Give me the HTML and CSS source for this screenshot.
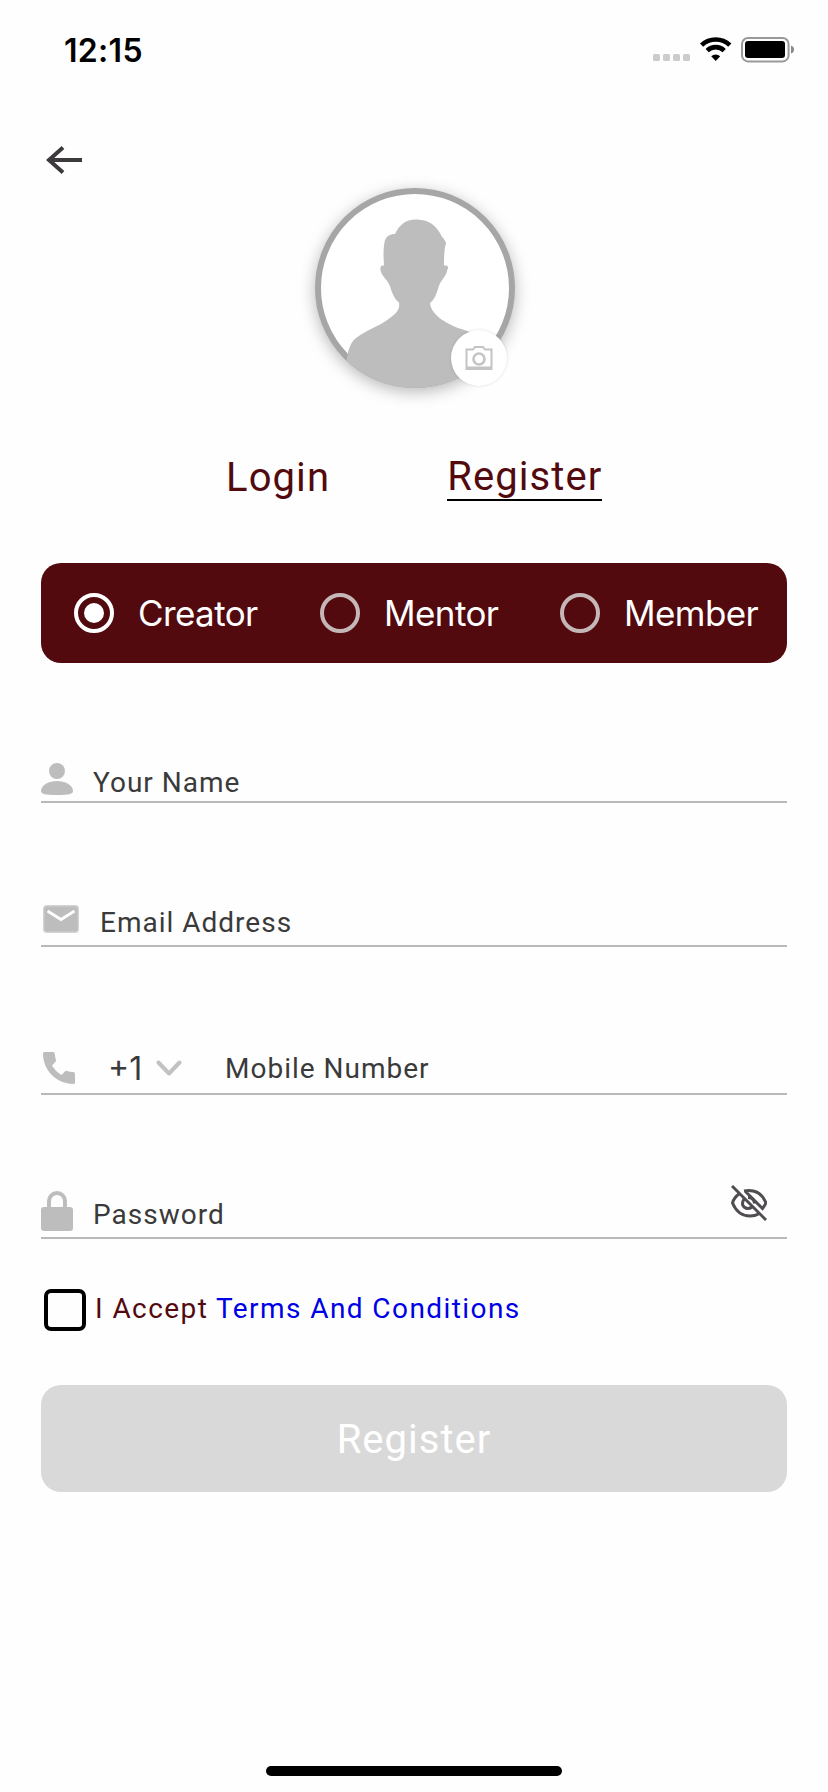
FILE: index.html
```html
<!DOCTYPE html>
<html lang="en">
<head>
<meta charset="utf-8">
<title>Register</title>
<link rel="stylesheet" href="styles.css">
</head>
<body>
<div class="screen">
  <header class="status">
    <span class="time">12:15</span>
    <svg class="status-icons" width="142" height="26" viewBox="0 0 142 26">
      <g fill="#ccc"><rect x="0" y="17" width="7" height="7" rx="1.5"/><rect x="10" y="17" width="7" height="7" rx="1.5"/><rect x="20" y="17" width="7" height="7" rx="1.5"/><rect x="30" y="17" width="7" height="7" rx="1.5"/></g>
      <g fill="none" stroke="#000" stroke-width="4.7"><path d="M48.6 8.1a20.5 20.5 0 0 1 28.2 0"/><path d="M54.2 13.6a12.3 12.3 0 0 1 17 0"/></g>
      <path d="M58.2 19.2a6.5 6.5 0 0 1 9 0L62.7 24z" fill="#000"/>
      <rect x="89" y="1" width="46.6" height="23.4" rx="6" fill="none" stroke="#999" stroke-width="2"/>
      <rect x="92" y="4" width="40" height="17" rx="3" fill="#000"/>
      <path d="M138 8.500q3 1 3 4t-3 4z" fill="#888"/>
    </svg>
  </header>

  <nav class="nav">
    <svg width="36" height="28" viewBox="0 0 36 28" fill="none" stroke="#3c3a3c" stroke-width="4"><path d="M2 14h34M17 1.500L3 14l14 12.500"/></svg>
  </nav>

  <div class="avatar">
    <svg class="person" width="200" height="200" viewBox="0 0 200 200">
      <defs><clipPath id="disc"><circle cx="100" cy="100" r="100"/></clipPath></defs>
      <g clip-path="url(#disc)">
        <path fill="#bdbdbd" d="M102 31.500C91 31 84 37 80 46C75 46 71 48 69.500 54C68 62 68.500 70 69 77.500C66 77 65 79 65.500 82C67 89 72 91 74.500 97C77 104 79 111 84 114.500C85 121 82 125 75 130C65 138 51 142 41 150C34 156 33 164 31.500 173V200H190V160C178 150 155 144 143 140C131 135 116 127 115 115C119 112 121 107 123 101C124.500 93 131 89 132 83C134 78 133 77.500 129 77.500C129 70 129 62 131 55C130 51 127 50 125.500 46C121 38 115 32 102 31.500z"/>
      </g>
    </svg>
    <span class="camera">
      <svg width="28" height="26" viewBox="0 0 28 26" fill="none" stroke="#c4c4c4" stroke-width="2"><path d="M1.500 4.500H8L10 2h8l2 2.500h6.500V24h-25z"/><path d="M1 22.500h26"/><circle cx="14" cy="14" r="5.500" stroke-width="2.600"/></svg>
    </span>
  </div>

  <div class="tabs">
    <span class="tab">Login</span>
    <span class="tab tab-active">Register</span>
  </div>

  <div class="roles">
    <span class="role"><i class="radio radio-on"></i>Creator</span>
    <span class="role"><i class="radio"></i>Mentor</span>
    <span class="role"><i class="radio"></i>Member</span>
  </div>

  <div class="field field-name">
    <svg class="icon" width="32" height="32" viewBox="0 0 32 32" fill="#bdbdbd"><circle cx="16" cy="8" r="8"/><path d="M0 28C0 22 8 18 16 18s16 4 16 10c0 3-4 4-16 4S0 31 0 28z"/></svg>
    <span class="label">Your Name</span>
  </div>
  <div class="field field-email">
    <svg class="icon" width="36" height="28" viewBox="0 0 36 28"><rect x=".7" y=".7" width="34.600" height="26.600" rx="3" fill="#bdbdbd" stroke="#d2d2d2" stroke-width="1.400"/><path d="M4.500 6L18 14.500 31.500 6" fill="none" stroke="#fff" stroke-width="2.800"/></svg>
    <span class="label">Email Address</span>
  </div>
  <div class="field field-mobile">
    <svg class="icon" width="32" height="32" viewBox="0 0 32 32" fill="#bdbdbd"><path d="M1.500 0H10q1.500 0 1.700 1.700.3 3.200 1.200 6 .4 1.200-.4 2L9 13.500Q12.500 19.500 18.500 23l3.600-3.700q1-.8 2-.4 3 1 6.100 1.200Q32 20.300 32 22v8.500Q32 32 30.400 32C13.500 32 0 18.500 0 1.600Q0 0 1.500 0z"/></svg>
    <span class="code">+1</span>
    <svg class="chevron" width="26" height="16" viewBox="0 0 26 16" fill="none" stroke="#c2c2c2" stroke-width="4" stroke-linecap="round" stroke-linejoin="round"><path d="M2.500 2.500l10.500 11L23.500 2.500"/></svg>
    <span class="label">Mobile Number</span>
  </div>
  <div class="field field-password">
    <svg class="icon" width="32" height="40" viewBox="0 0 32 40"><rect y="16" width="32" height="24" rx="3" fill="#bdbdbd"/><path d="M8 18v-8a8 8 0 0 1 16 0v8" fill="none" stroke="#bdbdbd" stroke-width="4"/></svg>
    <span class="label">Password</span>
    <svg class="eye" width="36" height="36" viewBox="0 0 36 36" fill="none" stroke="#504d50" stroke-width="3"><path d="M8 9Q3 12.500 1.500 18 7 31 19 31q5 0 8.500-2"/><path d="M13 6q16-3 22 12-1.500 3-3.500 5.500L14 6"/><path d="M13 14q-3 5 0 8 4 3 8 0M17 12.500q6 0 6.500 6"/><path d="M1 1l34 34" stroke-width="3"/></svg>
  </div>

  <div class="terms">
    <i class="checkbox"></i>
    <span class="accept">I Accept <span class="link">Terms And Conditions</span></span>
  </div>

  <div class="submit">Register</div>
  <div class="home"></div>
</div>
</body>
</html>
```
FILE: styles.css
```css
* { box-sizing: border-box; }
body { margin: 0; background: #fefefe; font-family: Roboto, sans-serif; }
svg { display: block; flex: none; }
.screen {
  width: 828px;
  height: 1792px;
  display: flex;
  flex-direction: column;
  padding: 0 41px;
}
.status {
  height: 100px;
  flex: none;
  display: flex;
  justify-content: space-between;
  padding: 30px 0 0 23px;
}
.time {
  font: 600 32px/42px Inter, sans-serif;
  letter-spacing: 0.3px;
  color: #000;
}
.status-icons { margin: 7px -8px 0 0; }
.nav { height: 88px; flex: none; padding: 46px 0 0 5px; }
.avatar {
  position: relative;
  width: 200px;
  height: 200px;
  flex: none;
  margin-left: 274px;
  border: 6px solid #a6a6a6;
  border-radius: 50%;
  background: #fff;
  box-shadow: 0 4px 16px rgba(0, 0, 0, .28);
}
.person { margin: -6px; }
.camera {
  position: absolute;
  right: 2px;
  bottom: -4px;
  width: 56px;
  height: 56px;
  display: flex;
  align-items: center;
  justify-content: center;
  border-radius: 50%;
  background: #fff;
  box-shadow: 0 0 3px rgba(0, 0, 0, .14);
}
.tabs {
  height: 175px;
  flex: none;
  display: flex;
  align-items: flex-start;
  gap: 117px;
  padding: 65px 0 0 185px;
}
.tab {
  font-size: 40px;
  line-height: 48px;
  letter-spacing: 1.1px;
  color: #520a0e;
  padding-top: 1px;
}
.tab-active { height: 48px; padding: 0; border-bottom: 2px solid #000; }
.roles {
  height: 100px;
  flex: none;
  display: grid;
  grid-template-columns: 246px 240px auto;
  align-items: center;
  padding-left: 33px;
  border-radius: 20px;
  background: #520a0e;
}
.role {
  display: flex;
  align-items: center;
  gap: 24px;
  font: 400 35px/44px Inter, sans-serif;
  letter-spacing: -0.6px;
  color: #fff;
}
.radio {
  width: 40px;
  height: 40px;
  padding: 6px;
  border: 4px solid #c5b7b8;
  border-radius: 50%;
}
.radio-on { border-color: #fff; }
.radio-on::before {
  content: "";
  display: block;
  width: 20px;
  height: 20px;
  border-radius: 50%;
  background: #fff;
}
.field {
  flex: none;
  display: flex;
  align-items: flex-end;
  border-bottom: 2px solid #b9b9b9;
  color: #3a3a3a;
}
.label { font-size: 28px; line-height: 32px; letter-spacing: 1px; }
.field-name { height: 140px; }
.field-name .icon { margin: 0 20px 6px 0; }
.field-name .label { margin-bottom: 2px; }
.field-email { height: 144px; }
.field-email .icon { margin: 0 21px 12px 2px; }
.field-email .label { margin-bottom: 6px; }
.field-mobile { height: 148px; }
.field-mobile .icon { margin: 0 33px 9px 2px; }
.field-mobile .label { margin: 0 0 8px 43px; }
.code { font: 400 32px/40px Inter, sans-serif; width: 48px; margin-bottom: 4px; }
.chevron { margin-bottom: 17px; }
.field-password { height: 144px; }
.field-password .icon { margin: 0 20px 6px 0; }
.field-password .label { margin-bottom: 6px; }
.eye { margin: 0 20px 16px auto; }
.terms {
  height: 146px;
  flex: none;
  display: flex;
  align-items: flex-start;
  padding: 50px 0 0 3px;
}
.checkbox {
  width: 42px;
  height: 42px;
  border: 4px solid #000;
  border-radius: 7px;
}
.accept {
  margin: 4px 0 0 9px;
  font-size: 28px;
  line-height: 32px;
  letter-spacing: 1.42px;
  color: #520a0e;
}
.link { color: #0000e6; }
.submit {
  height: 107px;
  flex: none;
  border-radius: 20px;
  background: #d9d9d9;
  color: #fff;
  font-size: 40px;
  line-height: 110px;
  letter-spacing: 1px;
  text-align: center;
}
.home {
  width: 296px;
  height: 10px;
  margin: auto auto 16px;
  border-radius: 5px;
  background: #000;
}
```
